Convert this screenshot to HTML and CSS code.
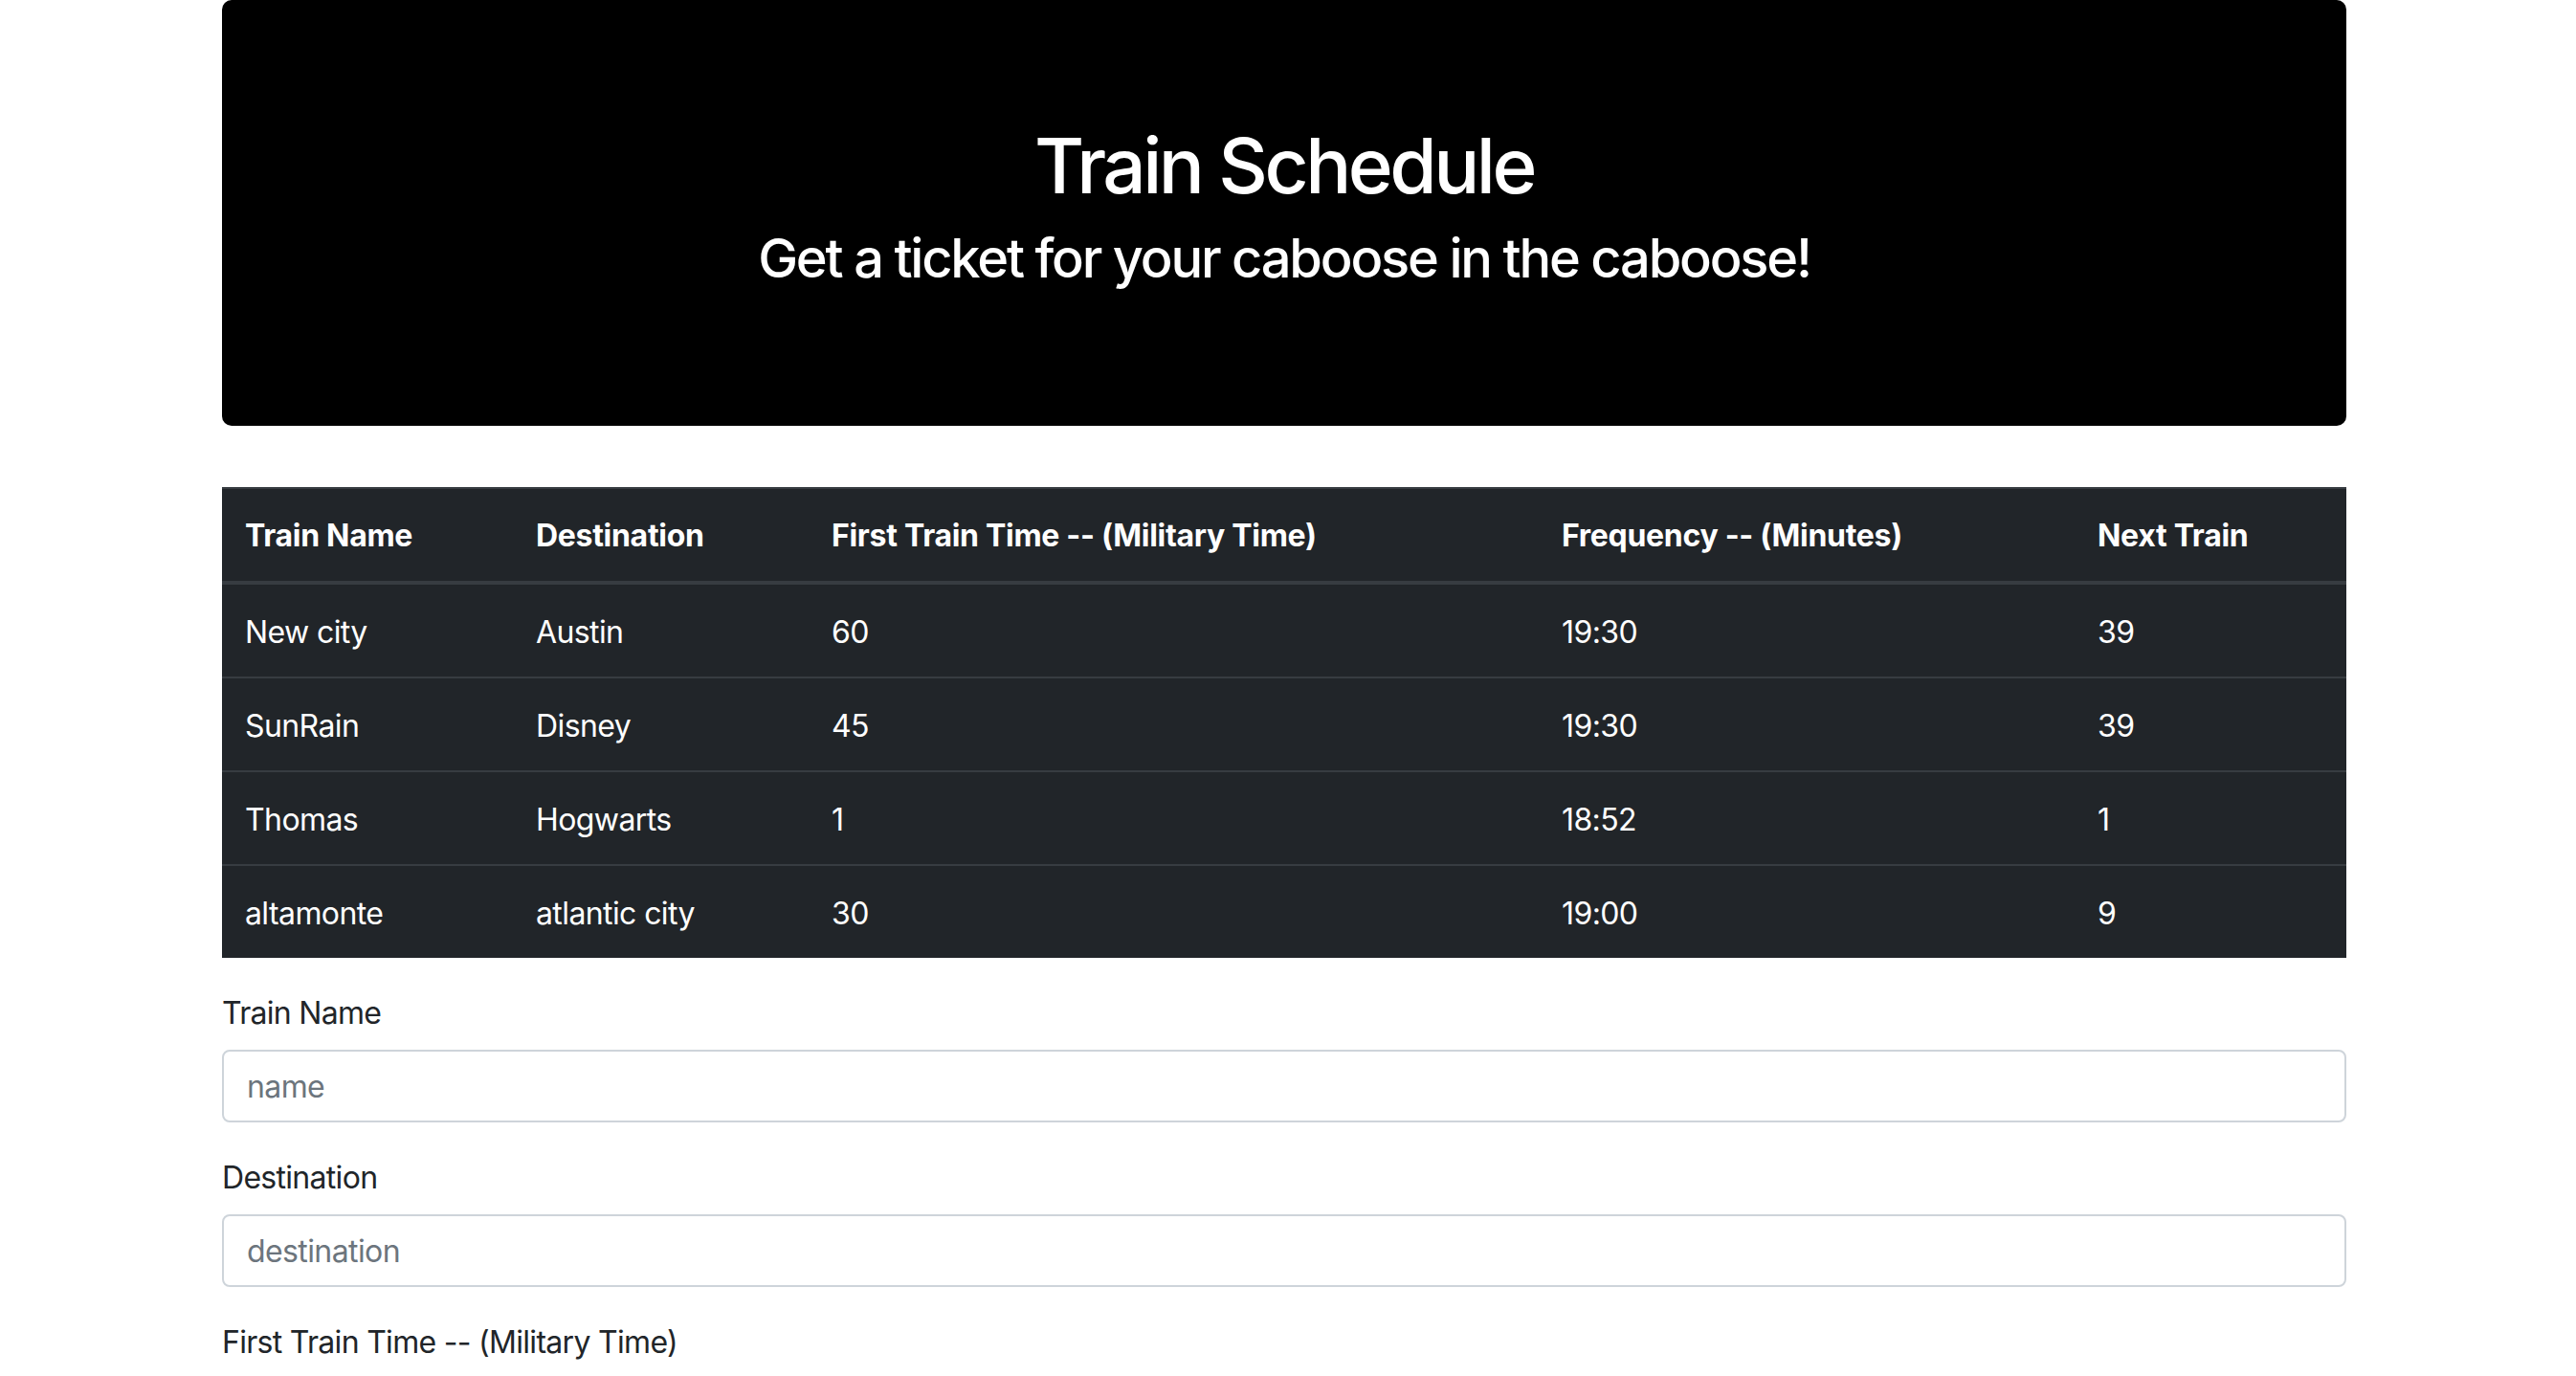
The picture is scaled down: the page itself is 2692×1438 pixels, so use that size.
FILE: index.html
```html
<!DOCTYPE html>
<html lang="en">
<head>
<meta charset="utf-8">
<title>Train Schedule</title>
<link rel="stylesheet" href="styles.css">
</head>
<body>
<div class="container">
  <header class="jumbotron">
    <h1 class="title">Train Schedule</h1>
    <h3 class="subtitle">Get a ticket for your caboose in the caboose!</h3>
  </header>

  <table class="schedule">
    <colgroup>
      <col class="c-name">
      <col class="c-dest">
      <col class="c-first">
      <col class="c-freq">
      <col class="c-next">
    </colgroup>
    <thead>
      <tr>
        <th>Train Name</th>
        <th>Destination</th>
        <th>First Train Time -- (Military Time)</th>
        <th>Frequency -- (Minutes)</th>
        <th>Next Train</th>
      </tr>
    </thead>
    <tbody>
      <tr><td>New city</td><td>Austin</td><td>60</td><td>19:30</td><td>39</td></tr>
      <tr><td>SunRain</td><td>Disney</td><td>45</td><td>19:30</td><td>39</td></tr>
      <tr><td>Thomas</td><td>Hogwarts</td><td>1</td><td>18:52</td><td>1</td></tr>
      <tr><td>altamonte</td><td>atlantic city</td><td>30</td><td>19:00</td><td>9</td></tr>
    </tbody>
  </table>

  <form class="train-form">
    <div class="form-group">
      <label class="form-label" for="name">Train Name</label>
      <input class="form-control" id="name" type="text" placeholder="name">
    </div>
    <div class="form-group">
      <label class="form-label" for="destination">Destination</label>
      <input class="form-control" id="destination" type="text" placeholder="destination">
    </div>
    <div class="form-group">
      <label class="form-label" for="first">First Train Time -- (Military Time)</label>
      <input class="form-control" id="first" type="text" placeholder="HH:mm">
    </div>
    <div class="form-group">
      <label class="form-label" for="freq">Frequency -- (Minutes)</label>
      <input class="form-control" id="freq" type="text" placeholder="minutes">
    </div>
    <button class="btn" type="submit">Submit</button>
  </form>
</div>
</body>
</html>
```
FILE: styles.css
```css
html, body {
  margin: 0;
  padding: 0;
  background: #fff;
}

body {
  font-family: Inter, "Noto Sans", "Liberation Sans", sans-serif;
  font-size: 32px;
  line-height: 48px;
  color: #212529;
}

.container {
  width: 2220px;
  margin-left: 232px;
}

.jumbotron {
  background: #000;
  color: #fff;
  border-radius: 10px;
  padding: 125px 64px 126px;
  margin-bottom: 64px;
  text-align: center;
}

.title {
  margin: 0 0 16px;
  font-size: 80px;
  line-height: 96px;
  font-weight: 500;
  letter-spacing: -3.5px;
}

.subtitle {
  margin: 0 0 16px;
  font-size: 56px;
  line-height: 66px;
  font-weight: 500;
  letter-spacing: -2.2px;
}

.schedule {
  width: 100%;
  table-layout: fixed;
  border-collapse: collapse;
  background: #212529;
  color: #fff;
  margin-bottom: 32px;
}

.c-name { width: 304px; }
.c-dest { width: 309px; }
.c-first { width: 763px; }
.c-freq { width: 560px; }
.c-next { width: 284px; }

.schedule th,
.schedule td {
  padding: 26px 24px 22px;
  text-align: left;
  vertical-align: top;
  border-top: 2px solid #373c41;
  white-space: nowrap;
  letter-spacing: -0.6px;
}

.schedule th {
  font-weight: 700;
  padding: 25px 24px 23px;
  letter-spacing: -0.3px;
}

.schedule thead th {
  border-bottom: 4px solid #373c41;
}

.schedule td {
  font-weight: 400;
}

.form-group {
  margin-bottom: 32px;
}

.form-label {
  display: inline-block;
  padding-top: 2px;
  margin-bottom: 14px;
  letter-spacing: -0.7px;
}

.form-control {
  display: block;
  box-sizing: border-box;
  width: 100%;
  height: 76px;
  padding: 12px 24px;
  font-family: inherit;
  font-size: 32px;
  line-height: 48px;
  color: #495057;
  background: #fff;
  border: 2px solid #ced4da;
  border-radius: 8px;
  letter-spacing: -0.6px;
}

.form-control::placeholder {
  color: #6c757d;
  opacity: 1;
}

.btn {
  font-family: inherit;
  font-size: 32px;
  line-height: 48px;
  padding: 12px 24px;
  border: 2px solid #007bff;
  border-radius: 8px;
  background: #007bff;
  color: #fff;
}
```
